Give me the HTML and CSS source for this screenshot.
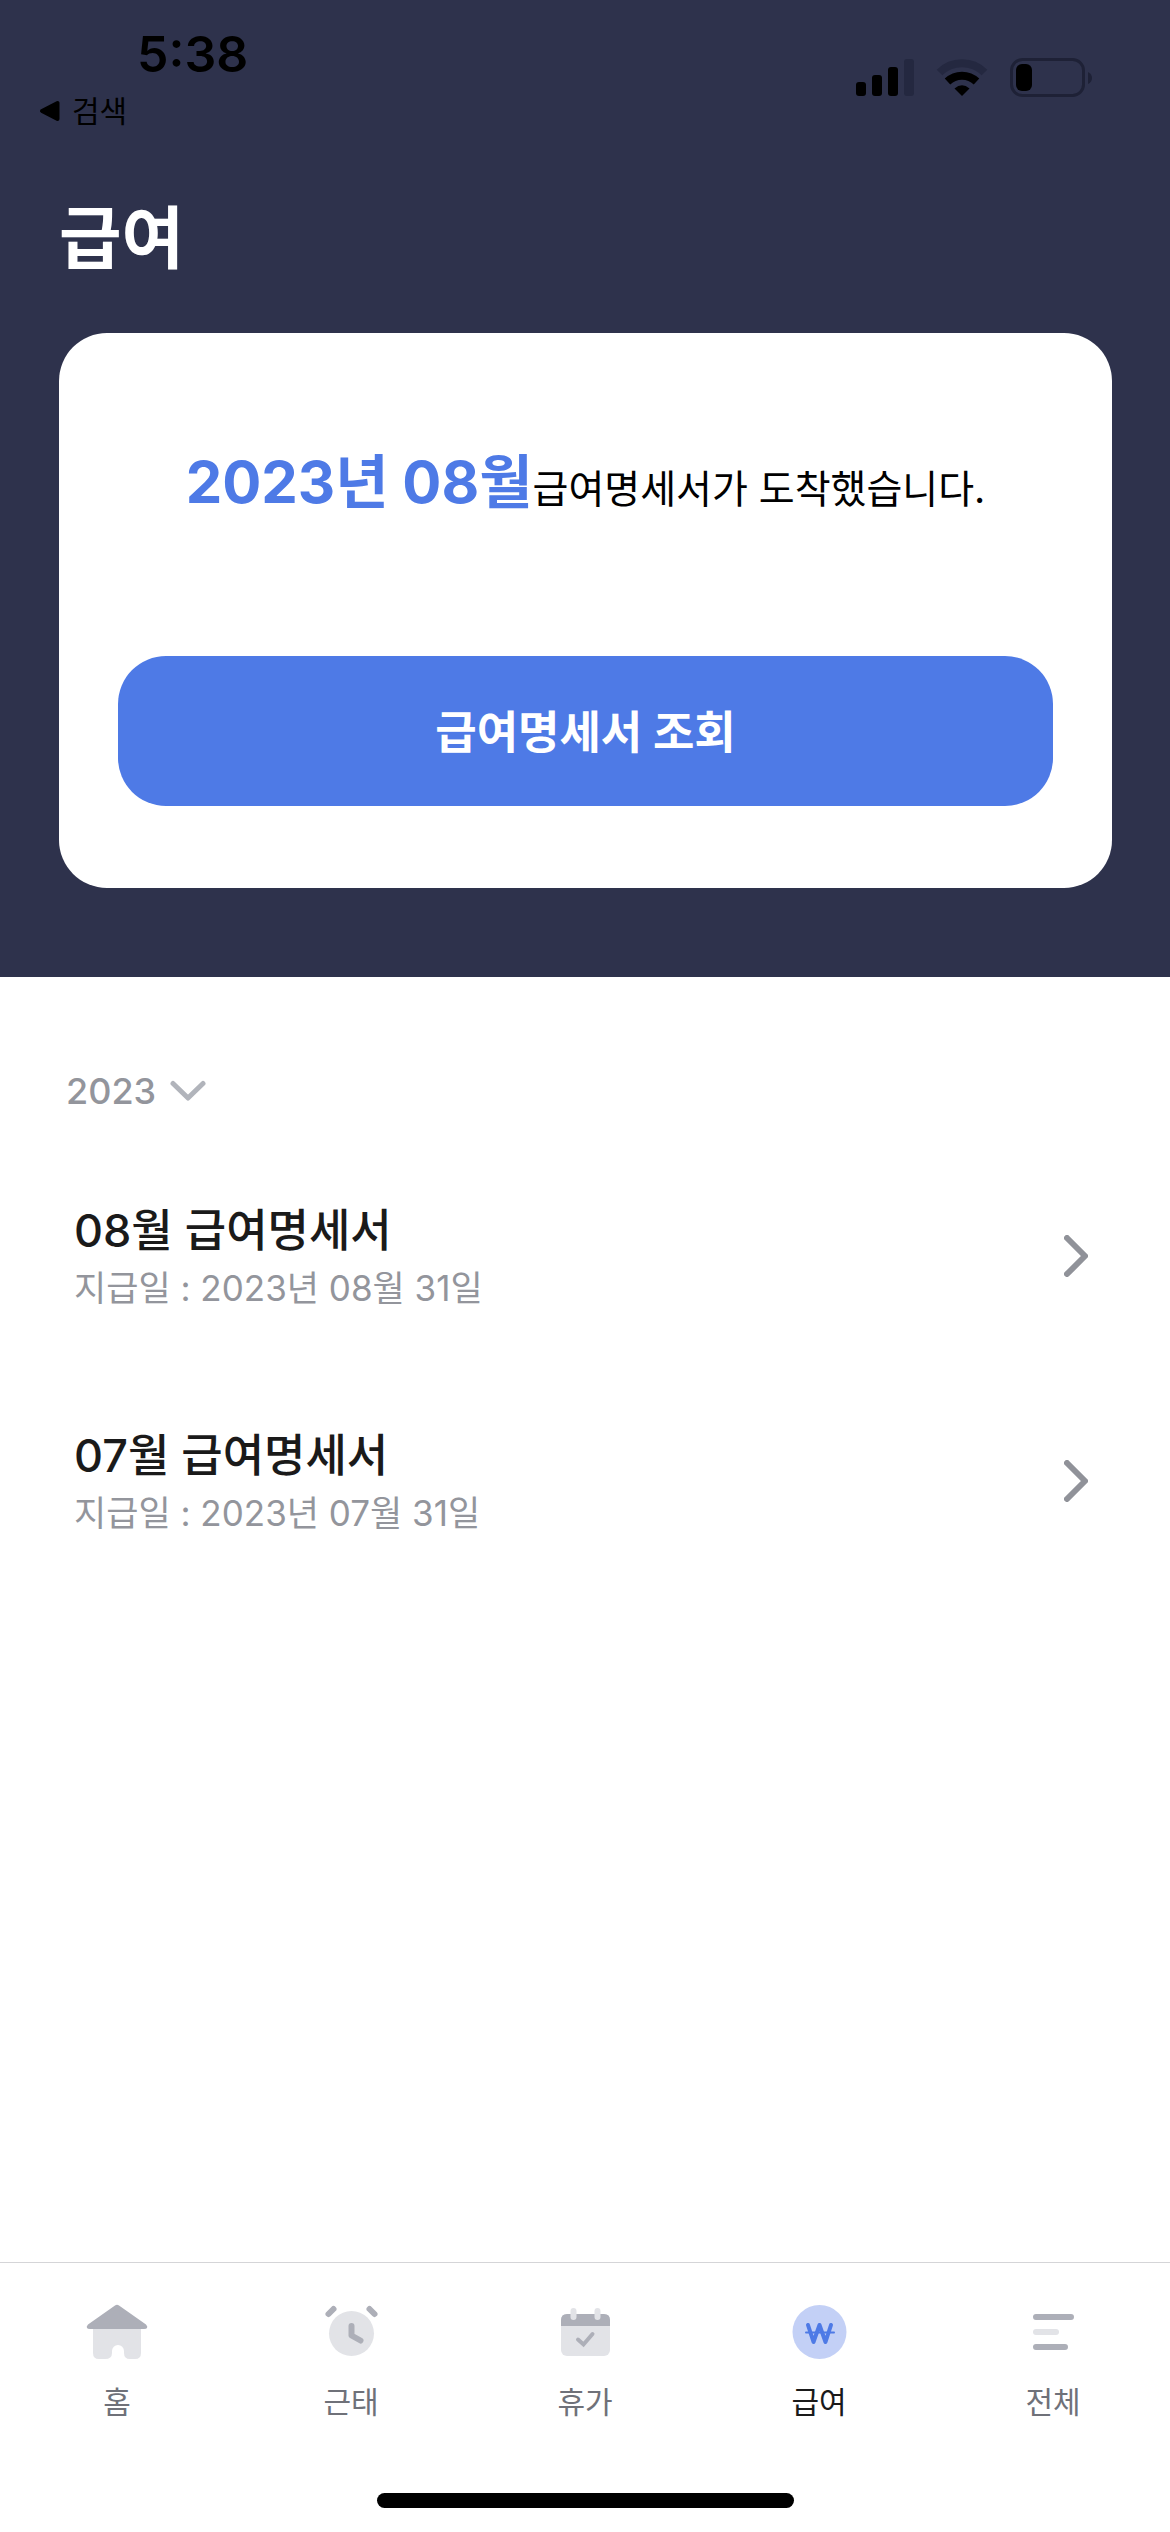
FILE: index.html
```html
<!DOCTYPE html>
<html lang="ko">
<head>
<meta charset="utf-8">
<meta name="viewport" content="width=device-width, initial-scale=1">
<title>급여</title>
<link rel="stylesheet" href="styles.css">
</head>
<body>
<div class="app">
  <header class="hero">
    <div class="status">
      <div class="status-left">
        <time class="clock">5:38</time>
        <a class="back" href="#search">
          <svg class="back-icon" viewBox="0 0 21 22" aria-hidden="true"><path d="M3 11 18.500 3V19Z" fill="#000" stroke="#000" stroke-width="4" stroke-linejoin="round"/></svg>
          검색
        </a>
      </div>
      <div class="status-icons" aria-hidden="true">
        <svg class="signal" viewBox="0 0 58 39">
          <rect x="0" y="24" width="10" height="14" rx="3"/>
          <rect x="16" y="17" width="10" height="21" rx="3"/>
          <rect x="32" y="9" width="10" height="29" rx="3"/>
          <rect x="48" y="1" width="10" height="37" rx="3" fill="#242840"/>
        </svg>
        <svg class="wifi" viewBox="0 0 52 39">
          <path d="M3.500 14.500A32 32 0 0 1 48.500 14.500" fill="none" stroke="#242840" stroke-width="8"/>
          <path d="M11.500 23.500A21 21 0 0 1 40.500 23.500" fill="none" stroke="#000" stroke-width="8"/>
          <path d="M18.500 30.500Q26 24 33.500 30.500L26 38Z"/>
        </svg>
        <svg class="battery" viewBox="0 0 82 39">
          <rect x="1.500" y="1.500" width="72" height="36" rx="11" fill="none" stroke="#1e2136" stroke-width="3"/>
          <rect x="6" y="6" width="16" height="27" rx="6"/>
          <path d="M78 14Q82 16 82 20T78 26Z" fill="#1e2136"/>
        </svg>
      </div>
    </div>
    <h1 class="title">급여</h1>
    <section class="card">
      <p class="notice"><strong class="month">2023년 08월</strong>급여명세서가 도착했습니다.</p>
      <button class="view" type="button">급여명세서 조회</button>
    </section>
  </header>

  <main class="content">
    <label class="year">
      <select class="year-select" aria-label="연도">
        <option>2023</option>
      </select>
      <svg class="year-icon" viewBox="0 0 36 22" aria-hidden="true"><path d="M3 3.500 18 18 33 3.500" fill="none" stroke="#b1b4bb" stroke-width="5" stroke-linecap="round" stroke-linejoin="round"/></svg>
    </label>
    <ul class="list">
      <li>
        <a class="row" href="#2023-08">
          <span class="row-text">
            <span class="row-title">08월 급여명세서</span>
            <span class="row-date">지급일 : 2023년 08월 31일</span>
          </span>
          <svg class="row-icon" viewBox="0 0 24 42" aria-hidden="true"><path d="M3 3 21 21 3 39" fill="none" stroke="#909299" stroke-width="6" stroke-linecap="round" stroke-linejoin="round"/></svg>
        </a>
      </li>
      <li>
        <a class="row" href="#2023-07">
          <span class="row-text">
            <span class="row-title">07월 급여명세서</span>
            <span class="row-date">지급일 : 2023년 07월 31일</span>
          </span>
          <svg class="row-icon" viewBox="0 0 24 42" aria-hidden="true"><path d="M3 3 21 21 3 39" fill="none" stroke="#909299" stroke-width="6" stroke-linecap="round" stroke-linejoin="round"/></svg>
        </a>
      </li>
    </ul>
  </main>

  <nav class="tabs">
    <div class="tab-list">
      <a class="tab" href="#home">
        <svg class="tab-icon" viewBox="0 0 72 72" aria-hidden="true">
          <path d="M12 32H60V57Q60 63 54 63H49Q43 63 43 57V55A6 6 0 0 0 31 55V57Q31 63 24 63H18Q12 63 12 57Z" fill="#e2e3e7"/>
          <path d="M34 9.500Q36 8 38 9.500L65 28.500Q67 30.500 66 32Q65.500 33 63 33H9Q6.500 33 6 32Q5 30.500 7 28.500Z" fill="#adafb8"/>
        </svg>
        <span>홈</span>
      </a>
      <a class="tab" href="#attendance">
        <svg class="tab-icon" viewBox="0 0 72 72" aria-hidden="true">
          <circle cx="36.500" cy="37.500" r="22.500" fill="#e2e3e7"/>
          <path d="M36.500 30V39.500L45.500 44.500M18.500 13 13.500 18M54.500 13 59.500 18" fill="none" stroke="#adafb8" stroke-width="6" stroke-linecap="round" stroke-linejoin="round"/>
        </svg>
        <span>근태</span>
      </a>
      <a class="tab" href="#leave">
        <svg class="tab-icon" viewBox="0 0 72 72" aria-hidden="true">
          <rect x="12" y="18" width="49" height="42" rx="6" fill="#e2e3e7"/>
          <path d="M12 30V24Q12 18 18 18H55Q61 18 61 24V30Z" fill="#adafb8"/>
          <path d="M24.500 15V21M48.500 15V21" stroke="#e2e3e7" stroke-width="6" stroke-linecap="round"/>
          <path d="M29 43.500 34.500 48.500 43.500 38" fill="none" stroke="#adafb8" stroke-width="4" stroke-linecap="round"/>
        </svg>
        <span>휴가</span>
      </a>
      <a class="tab tab-active" href="#salary" aria-current="page">
        <svg class="tab-icon" viewBox="0 0 72 72" aria-hidden="true">
          <circle cx="36.500" cy="36" r="27" fill="#c3d0f6"/>
          <path d="M25 29 30.500 46 36.500 29 42.500 46 48 29" fill="none" stroke="#4e7ae6" stroke-width="4" stroke-linecap="round" stroke-linejoin="round"/>
          <path d="M23 36.500H51" stroke="#4e7ae6" stroke-width="2" stroke-linecap="round"/>
        </svg>
        <span>급여</span>
      </a>
      <a class="tab" href="#all">
        <svg class="tab-icon" viewBox="0 0 72 72" aria-hidden="true">
          <path d="M19 21H54M19 51H48" stroke="#adafb8" stroke-width="6" stroke-linecap="round"/>
          <path d="M19 36H39" stroke="#e2e3e7" stroke-width="6" stroke-linecap="round"/>
        </svg>
        <span>전체</span>
      </a>
    </div>
    <div class="home-bar"></div>
  </nav>
</div>
</body>
</html>
```
FILE: styles.css
```css
* {
  box-sizing: border-box;
}

body {
  margin: 0;
  background: #fff;
  color: #1a1a1a;
  font-family: Inter, "Noto Sans CJK KR", sans-serif;
}

a {
  color: inherit;
  text-decoration: none;
}

svg {
  display: block;
  flex: none;
}

.app {
  display: flex;
  flex-direction: column;
  min-height: 100vh;
}

.hero {
  padding: 0 58px 89px 59px;
  background: #2e324c;
}

.status {
  display: flex;
  justify-content: space-between;
  padding: 24px 20px 0 0;
  color: #000;
}

.status-left {
  display: flex;
  flex-direction: column;
}

.clock {
  margin-left: 78px;
  font-size: 50px;
  font-weight: 600;
  line-height: 60px;
}

.back {
  display: flex;
  align-items: center;
  gap: 12px;
  margin-left: -20px;
  font-size: 30px;
  line-height: 54px;
}

.back-icon {
  width: 21px;
  height: 22px;
}

.status-icons {
  display: flex;
  gap: 22px;
  margin-top: 34px;
}

.signal {
  width: 58px;
  height: 39px;
}

.wifi {
  width: 52px;
  height: 39px;
}

.battery {
  width: 82px;
  height: 39px;
}

.title {
  margin: 50px 0 45px;
  color: #fff;
  font-size: 68px;
  font-weight: 700;
  line-height: 100px;
}

.card {
  padding: 106px 59px 82px;
  border-radius: 48px;
  background: #fff;
}

.notice {
  margin: 0 0 117px;
  color: #000;
  font-size: 39px;
  line-height: 100px;
  text-align: center;
}

.month {
  color: #4e7ae6;
  font-size: 58px;
  font-weight: 700;
  line-height: 1;
}

.view {
  display: block;
  width: 100%;
  height: 150px;
  padding: 0 0 4px;
  border: 0;
  border-radius: 48px;
  background: #4e7ae6;
  color: #fff;
  font: inherit;
  font-size: 45px;
  font-weight: 700;
}

.content {
  flex: 1;
  padding: 84px 66px 0;
}

.year {
  display: inline-flex;
  align-items: center;
  gap: 13px;
  color: #93959c;
}

.year-select {
  appearance: none;
  padding: 0;
  border: 0;
  background: none;
  color: inherit;
  font: inherit;
  font-size: 36px;
  font-weight: 500;
  line-height: 60px;
}

.year-icon {
  width: 36px;
  height: 22px;
}

.list {
  margin: 22px 0 0;
  padding: 0;
  list-style: none;
}

.row {
  display: flex;
  align-items: center;
  justify-content: space-between;
  height: 225px;
  padding: 0 16px 0 8px;
}

.row-text {
  display: flex;
  flex-direction: column;
  padding-top: 4px;
}

.row-title {
  font-size: 45px;
  font-weight: 500;
  line-height: 60px;
}

.row-date {
  color: #93959c;
  font-size: 35px;
  line-height: 54px;
}

.row-icon {
  width: 24px;
  height: 42px;
}

.tabs {
  display: flex;
  flex-direction: column;
  align-items: center;
  padding: 33px 0 24px;
  border-top: 1px solid #d5d5d8;
}

.tab-list {
  display: grid;
  grid-template-columns: repeat(5, 1fr);
  width: 100%;
}

.tab {
  display: flex;
  flex-direction: column;
  align-items: center;
  gap: 10px;
  color: #6f7179;
  font-size: 30px;
  line-height: 48px;
}

.tab-active {
  color: #1a1a1a;
}

.tab-icon {
  width: 72px;
  height: 72px;
}

.home-bar {
  width: 417px;
  height: 15px;
  margin-top: 67px;
  border-radius: 8px;
  background: #000;
}
```
